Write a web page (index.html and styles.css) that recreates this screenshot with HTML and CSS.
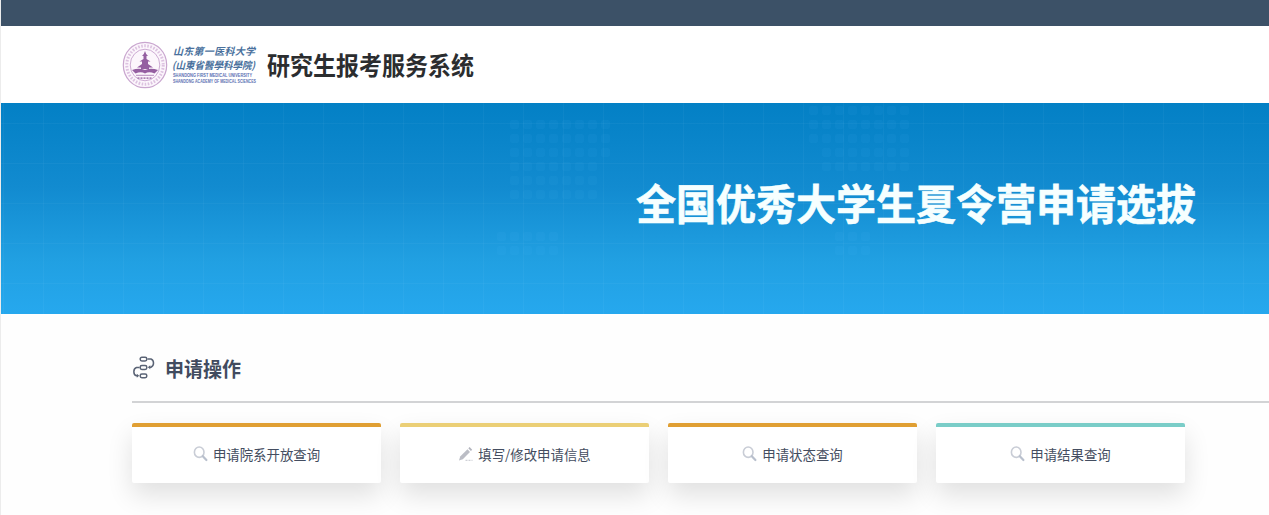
FILE: index.html
```html
<!DOCTYPE html>
<html lang="zh-CN">
<head>
  <meta charset="UTF-8" />
  <meta name="viewport" content="width=device-width, initial-scale=1.0" />
  <title>研究生报考服务系统</title>
  <link rel="stylesheet" href="styles.css">
</head>
<body>
  <svg class="symbols" width="0" height="0">
    <symbol id="icon-search" viewBox="0 0 16 16">
      <ellipse cx="6.2" cy="6.2" rx="4.8" ry="5.2" fill="none" stroke="#c9cdd6" stroke-width="1.6" />
      <path d="M9.8 10.2L13.4 14" fill="none" stroke="#b9c0cd" stroke-width="2.2" stroke-linecap="round" />
    </symbol>
    <symbol id="icon-edit" viewBox="0 0 16 16">
      <path d="M1 14.6L2.2 10.5L9.5 3.2L12 5.9L4.8 13.3Z" fill="#bbbdc5" />
      <path d="M10.3 2.3L11.6 1L14.2 3.7L12.9 5Z" fill="#b3b5be" />
      <path d="M7.5 14.3H14.5" stroke="#c3c5cc" stroke-width="1" stroke-dasharray="2 1" />
    </symbol>
  </svg>

  <div class="topbar"></div>
  <header class="header">
    <svg class="emblem" width="46" height="48" viewBox="0 0 46 48">
      <ellipse cx="23" cy="24" rx="21.7" ry="22.7" fill="#fcf6fc" stroke="#c9a6cf" stroke-width="1.2" />
      <ellipse cx="23" cy="24" rx="18.2" ry="19.2" fill="none" stroke="#dcc2e0" stroke-width="3" stroke-dasharray="1.6 1.5" />
      <ellipse cx="23" cy="24" rx="14.8" ry="15.8" fill="none" stroke="#cdabd3" stroke-width="1" />
      <path d="M23 10L24.2 13L26 15H24.5V18L28.5 20.5H26V23L31 26.5H27V28H19V26.5H15L20 23V20.5H17.5L21.5 18V15H20L21.8 13Z" fill="#955fa1" />
      <path d="M10 29Q17 26.5 23 29Q29 26.5 36 29L32.5 32.5Q27 30 23 32.5Q19 30 13.5 32.5Z" fill="#955fa1" />
      <path d="M14 34.3H32" stroke="#b48cbc" stroke-width="1" />
      <path d="M15.5 37.2H30.5" stroke="#ad82b5" stroke-width="1.8" stroke-dasharray="2 1" />
    </svg>
    <svg class="school" width="88" height="48" viewBox="0 0 88 48">
      <g class="school-cn">
        <text x="1" y="13.5" textLength="82" lengthAdjust="spacing">山东第一医科大学</text>
        <text x="0" y="28" textLength="83" lengthAdjust="spacingAndGlyphs">(山東省醫學科學院)</text>
      </g>
      <g class="school-en">
        <text x="1" y="36.2" textLength="79" lengthAdjust="spacingAndGlyphs">SHANDONG FIRST MEDICAL UNIVERSITY</text>
        <text x="1" y="41.7" textLength="83" lengthAdjust="spacingAndGlyphs">SHANDONG ACADEMY OF MEDICAL SCIENCES</text>
      </g>
    </svg>
    <h1>研究生报考服务系统</h1>
  </header>

  <div class="banner">
    <svg class="banner-dots" width="1269" height="211">
      <defs>
        <pattern id="grid" width="40" height="40" patternUnits="userSpaceOnUse">
          <path d="M0 20.5H40M2.5 0V40" stroke="#fff" stroke-opacity=".03" />
        </pattern>
        <pattern id="dots" width="13" height="14" patternUnits="userSpaceOnUse">
          <rect x="2" y="3" width="9" height="9" rx="3" fill="#6cf" fill-opacity=".05" />
        </pattern>
      </defs>
      <rect width="1269" height="211" fill="url(#grid)" />
      <path d="M507 14H611V56H598V98H507Z M494 126H559V154H494Z" fill="url(#dots)" />
      <path d="M806 0H910V70H819V42H806Z M832 126H871V154H832Z" fill="url(#dots)" />
    </svg>
    <h2>全国优秀大学生夏令营申请选拔</h2>
  </div>

  <main class="main">
    <div class="section-title">
      <svg width="24" height="24" viewBox="0 0 24 24" fill="none" stroke="#5a6375" stroke-width="1.5">
        <rect x="8.2" y="1.2" width="6.6" height="3.8" rx="1.7" />
        <rect x="8.2" y="9.6" width="6.6" height="3.8" rx="1.7" />
        <rect x="8.2" y="18" width="6.6" height="3.8" rx="1.7" />
        <path d="M15.5 3H19A3.6 4.3 0 0 1 19 11.2H17" />
        <path d="M7.5 11.5H4.5A3.6 4.3 0 0 0 4.5 19.8H6" />
        <path d="M18.3 9.2L15.8 11.3L18.3 13.2ZM4.8 17.8L7.2 19.8L4.8 21.8Z" fill="#5a6375" stroke="none" />
      </svg>
      <h3>申请操作</h3>
    </div>
    <div class="cards">
      <a class="card orange"><svg><use href="#icon-search" /></svg><span>申请院系开放查询</span></a>
      <a class="card yellow"><svg><use href="#icon-edit" /></svg><span>填写/修改申请信息</span></a>
      <a class="card orange"><svg><use href="#icon-search" /></svg><span>申请状态查询</span></a>
      <a class="card teal"><svg><use href="#icon-search" /></svg><span>申请结果查询</span></a>
    </div>
  </main>
</body>
</html>
```
FILE: styles.css
```css
* {
  box-sizing: border-box;
}
body {
  margin: 0;
  height: 515px;
  overflow: hidden;
  background-color: #fefefe;
  border-left: 1px solid #ececec;
  font-family: "Noto Sans CJK SC", "Liberation Sans", sans-serif;
}
h1, h2, h3 {
  margin: 0;
  font-weight: bold;
  white-space: nowrap;
}
.symbols {
  display: block;
}
.topbar {
  height: 26px;
  background-color: #3c5167;
}
.header {
  display: flex;
  align-items: center;
  height: 77px;
  padding-left: 121px;
  background-color: #fff;
}
.school {
  margin-left: 4px;
  overflow: visible;
}
.school-cn {
  font-family: "Noto Sans CJK SC", sans-serif;
  font-size: 10px;
  font-weight: bold;
  font-style: italic;
  fill: #4a719d;
}
.school-en {
  font-family: "Liberation Sans", sans-serif;
  font-size: 4.5px;
  font-weight: bold;
  fill: #5b70b3;
}
.header h1 {
  margin-left: 7px;
  padding-bottom: 2px;
  font-size: 23px;
  line-height: 30px;
  color: #2b2d2f;
  transform: scaleY(1.08);
}
.banner {
  display: flex;
  justify-content: flex-end;
  align-items: center;
  position: relative;
  height: 211px;
  padding-right: 73px;
  background: linear-gradient(#0380c5, #128bd0 40%, #21a0e2 75%, #26a8ee);
}
.banner-dots {
  position: absolute;
  top: 0;
  left: 0;
}
.banner h2 {
  position: relative;
  padding-bottom: 13px;
  font-size: 40px;
  line-height: 52px;
  color: #f6ffff;
  -webkit-text-stroke: 0.6px #f6ffff;
  transform: scaleY(1.05);
}
.main {
  padding-left: 131px;
}
.section-title {
  display: flex;
  align-items: center;
  height: 89px;
  padding-top: 22px;
  border-bottom: 2px solid #d2d3d5;
}
.section-title svg {
  margin-bottom: 2px;
}
.section-title h3 {
  margin-left: 9px;
  font-size: 19px;
  line-height: 28px;
  color: #414b5f;
  transform: scaleY(1.05);
}
.cards {
  display: grid;
  grid-template-columns: repeat(4, 249px);
  gap: 19px;
  padding-top: 20px;
}
.card {
  display: flex;
  justify-content: center;
  align-items: center;
  height: 60px;
  padding-bottom: 2px;
  background-color: #fff;
  border-top: 4px solid;
  border-radius: 2px;
  box-shadow: 0 12px 26px rgba(0, 0, 0, 0.12);
}
.card svg {
  width: 16px;
  height: 16px;
  margin-right: 4px;
}
.card span {
  font-size: 13.4px;
  line-height: 20px;
  color: #444d60;
}
.orange {
  border-color: #e09f33;
}
.yellow {
  border-color: #ebcf76;
}
.teal {
  border-color: #7acdc8;
}
```
